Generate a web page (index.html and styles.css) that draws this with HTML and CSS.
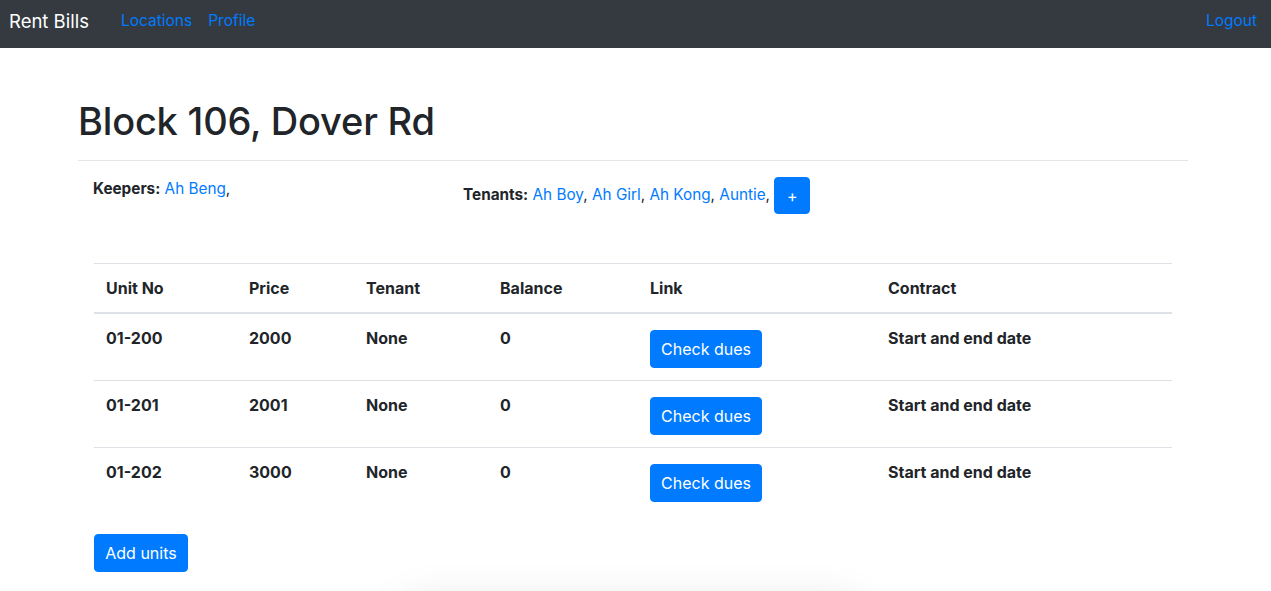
FILE: index.html
```html
<!DOCTYPE html>
<html lang="en">
<head>
<meta charset="utf-8">
<title>Rent Bills</title>
<link rel="stylesheet" href="styles.css">
</head>
<body>
<nav class="navbar">
  <a class="brand" href="#">Rent Bills</a>
  <ul class="nav">
    <li><a class="nav-link" href="#">Locations</a></li>
    <li><a class="nav-link" href="#">Profile</a></li>
  </ul>
  <a class="nav-link logout" href="#">Logout</a>
</nav>
<main class="container">
  <h1 class="title">Block 106, Dover Rd</h1>
  <hr class="divider">
  <div class="people">
    <div class="col"><b>Keepers:</b> <a href="#">Ah Beng</a>,</div>
    <div class="col"><b>Tenants:</b> <a href="#">Ah Boy</a>, <a href="#">Ah Girl</a>, <a href="#">Ah Kong</a>, <a href="#">Auntie</a>, <button class="btn btn-sm-plus">+</button></div>
  </div>
  <div class="units">
    <table class="table">
      <thead>
        <tr><th>Unit No</th><th>Price</th><th>Tenant</th><th>Balance</th><th>Link</th><th>Contract</th></tr>
      </thead>
      <tbody>
        <tr><td>01-200</td><td>2000</td><td>None</td><td>0</td><td><button class="btn btn-row">Check dues</button></td><td>Start and end date</td></tr>
        <tr><td>01-201</td><td>2001</td><td>None</td><td>0</td><td><button class="btn btn-row">Check dues</button></td><td>Start and end date</td></tr>
        <tr><td>01-202</td><td>3000</td><td>None</td><td>0</td><td><button class="btn btn-row">Check dues</button></td><td>Start and end date</td></tr>
      </tbody>
    </table>
    <button class="btn btn-add">Add units</button>
  </div>
</main>
<div class="floating-card"></div>
</body>
</html>
```
FILE: styles.css
```css
* { box-sizing: border-box; }
html, body { margin: 0; padding: 0; }
body {
  font-family: Inter, "Liberation Sans", Arial, sans-serif;
  font-size: 16px;
  line-height: 24px;
  color: #212529;
  background: #fff;
  overflow: hidden;
}
a { color: #007bff; text-decoration: none; }

.navbar {
  height: 48px;
  background: #343a40;
  display: flex;
  align-items: flex-start;
  padding: 9px 14px 0 9px;
}
.brand {
  color: #fff;
  font-size: 18.5px;
  line-height: 24px;
  margin-right: 24px;
}
.nav {
  list-style: none;
  margin: 0;
  padding: 0;
  display: flex;
  flex: 1;
  font-size: 15.5px;
}
.nav-link {
  display: block;
  padding: 0 8px;
  color: #007bff;
  line-height: 24px;
}
.logout { padding-right: 0; font-size: 15.5px; }

.container {
  width: 1110px;
  margin-left: 78px;
}
.title {
  font-size: 38px;
  font-weight: 500;
  line-height: 48px;
  margin: 49px 0 0 0;
  letter-spacing: -0.2px;
}
.divider {
  border: 0;
  border-top: 1px solid #e5e5e5;
  margin: 15px 0 16px 0;
}
.people {
  display: flex;
  padding-left: 15px;
  margin-bottom: 49px;
  font-size: 15.3px;
}
.people .col { width: 370px; }
.people b { font-weight: 700; }

.btn {
  display: inline-block;
  vertical-align: middle;
  background: #007bff;
  color: #fff;
  border: 1px solid #007bff;
  border-radius: 4px;
  font-family: inherit;
  font-size: 16px;
  line-height: 24px;
  padding: 6px 12px;
  cursor: pointer;
}
.btn-sm-plus { width: 36px; height: 37px; padding: 6px 0; text-align: center; }

.units { padding: 0 16px; }
.table {
  width: 100%;
  border-collapse: collapse;
  margin-bottom: 20px;
}
.table th, .table td {
  text-align: left;
  vertical-align: top;
  padding: 12px;
  border-top: 1px solid #dee2e6;
  font-weight: 700;
}
.table thead th { border-bottom: 2px solid #dee2e6; }
.table th:nth-child(1) { width: 143px; }
.table th:nth-child(2) { width: 117px; }
.table th:nth-child(3) { width: 134px; }
.table th:nth-child(4) { width: 150px; }
.table th:nth-child(5) { width: 238px; }
.btn-row { margin-top: 4px; width: 112px; padding: 6px 0; }
.btn-add { width: 94px; padding: 6px 0; }

.floating-card {
  position: fixed;
  left: 410px;
  width: 440px;
  top: 610px;
  height: 200px;
  background: #fff;
  box-shadow: 0 0 40px 6px rgba(0,0,0,0.13);
}
```
